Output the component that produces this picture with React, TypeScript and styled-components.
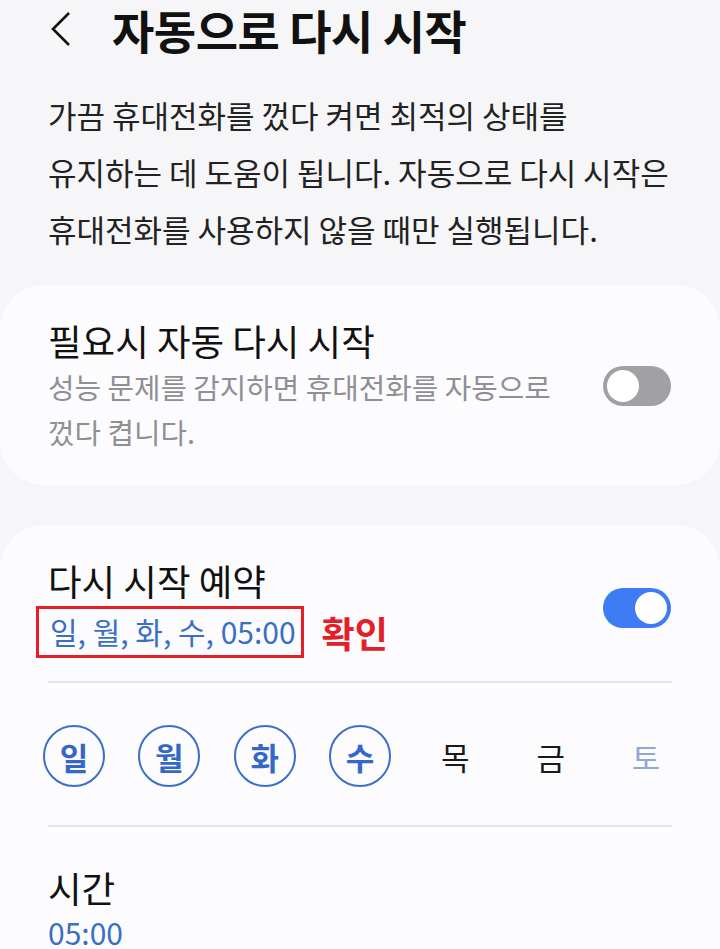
import React from "react";
import styled, { createGlobalStyle } from "styled-components";

const GlobalStyle = createGlobalStyle`
  html, body {
    margin: 0;
    padding: 0;
    background: #f6f6f8;
    font-family: "Noto Sans CJK KR", "Noto Sans", sans-serif;
  }
`;

const Page = styled.div`
  width: 720px;
  height: 949px;
  overflow: hidden;
  background: #f6f6f8;
`;

const Header = styled.header`
  display: flex;
  align-items: center;
  height: 58px;
  padding-left: 46px;
  gap: 36px;
`;

const BackButton = styled.button`
  display: flex;
  align-items: center;
  justify-content: center;
  width: 30px;
  height: 40px;
  padding: 0;
  border: none;
  background: none;
`;

const Title = styled.h1`
  margin: 0;
  font-size: 46px;
  line-height: 56px;
  font-weight: 700;
  color: #111;
  letter-spacing: -0.5px;
`;

const Description = styled.p`
  margin: 28px 48px 0;
  font-size: 31px;
  line-height: 57px;
  color: #222;
  white-space: nowrap;
`;

const Card = styled.section<{ $gap: number }>`
  background: #fcfcfe;
  border-radius: 44px;
  margin-top: ${(p) => p.$gap}px;
  padding: 0 48px;
`;

const Row = styled.div`
  display: flex;
  align-items: center;
  justify-content: space-between;
  gap: 24px;
`;

const TextBlock = styled.div`
  display: flex;
  flex-direction: column;
`;

const ItemTitle = styled.div`
  font-size: 36.5px;
  line-height: 46px;
  color: #111;
`;

const ItemSub = styled.div`
  font-size: 28.8px;
  line-height: 45px;
  color: #8f8f94;
  white-space: nowrap;
`;

const Track = styled.div<{ $on: boolean }>`
  position: relative;
  flex: none;
  width: 68px;
  height: 40px;
  border-radius: 20px;
  background: ${(p) => (p.$on ? "#3d7cf2" : "#a0a0a5")};
  margin-right: 1px;
`;

const Knob = styled.div<{ $on: boolean }>`
  position: absolute;
  top: 4px;
  left: ${(p) => (p.$on ? "32px" : "4px")};
  width: 32px;
  height: 32px;
  border-radius: 50%;
  background: #fff;
`;

const SummaryRow = styled.div`
  display: flex;
  align-items: center;
  margin-top: 2px;
`;

const Highlight = styled.div`
  display: inline-flex;
  align-items: center;
  margin-left: -12px;
  padding: 1px 5px 2px 11px;
  border: 3px solid #e3202a;
`;

const BlueText = styled.span`
  font-size: 30px;
  line-height: 43px;
  color: #3a6fc6;
`;

const Confirm = styled.span`
  margin-left: 18px;
  font-size: 36px;
  font-weight: 700;
  color: #e3202a;
`;

const Divider = styled.hr`
  margin: 0;
  border: none;
  height: 2px;
  background: #e4e4e7;
`;

const Days = styled.div`
  display: flex;
  justify-content: space-between;
  margin: 0 -5px;
  padding: 42px 0 38px;
`;

const Day = styled.div<{ $state: "on" | "off" | "weekend" }>`
  display: flex;
  align-items: center;
  justify-content: center;
  width: 62px;
  height: 62px;
  box-sizing: border-box;
  border-radius: 50%;
  border: ${(p) => (p.$state === "on" ? "2.5px solid #3b6fc9" : "none")};
  font-size: 31px;
  font-weight: ${(p) => (p.$state === "on" ? 700 : 400)};
  color: ${(p) =>
    p.$state === "on" ? "#3467c8" : p.$state === "weekend" ? "#8ea9d8" : "#1a1a1a"};
`;

const days: { label: string; state: "on" | "off" | "weekend" }[] = [
  { label: "일", state: "on" },
  { label: "월", state: "on" },
  { label: "화", state: "on" },
  { label: "수", state: "on" },
  { label: "목", state: "off" },
  { label: "금", state: "off" },
  { label: "토", state: "weekend" },
];

const Toggle = ({ on }: { on: boolean }) => (
  <Track $on={on}>
    <Knob $on={on} />
  </Track>
);

export default function App() {
  return (
    <Page>
      <GlobalStyle />
      <Header>
        <BackButton aria-label="뒤로">
          <svg width="24" height="36" viewBox="0 0 24 36">
            <path d="M20 2 L4 18 L20 34" fill="none" stroke="#111" strokeWidth="2.6" />
          </svg>
        </BackButton>
        <Title>자동으로 다시 시작</Title>
      </Header>

      <Description>
        가끔 휴대전화를 껐다 켜면 최적의 상태를
        <br />
        유지하는 데 도움이 됩니다. 자동으로 다시 시작은
        <br />
        휴대전화를 사용하지 않을 때만 실행됩니다.
      </Description>

      <Card $gap={28} style={{ paddingTop: 33, paddingBottom: 31 }}>
        <Row>
          <TextBlock>
            <ItemTitle>필요시 자동 다시 시작</ItemTitle>
            <ItemSub>
              성능 문제를 감지하면 휴대전화를 자동으로
              <br />
              껐다 켭니다.
            </ItemSub>
          </TextBlock>
          <Toggle on={false} />
        </Row>
      </Card>

      <Card $gap={40} style={{ paddingTop: 33, paddingBottom: 40 }}>
        <Row style={{ paddingBottom: 23 }}>
          <TextBlock>
            <ItemTitle>다시 시작 예약</ItemTitle>
            <SummaryRow>
              <Highlight>
                <BlueText>일, 월, 화, 수, 05:00</BlueText>
              </Highlight>
              <Confirm>확인</Confirm>
            </SummaryRow>
          </TextBlock>
          <Toggle on />
        </Row>
        <Divider />
        <Days>
          {days.map((d) => (
            <Day key={d.label} $state={d.state}>
              {d.label}
            </Day>
          ))}
        </Days>
        <Divider />
        <TextBlock style={{ paddingTop: 38 }}>
          <ItemTitle>시간</ItemTitle>
          <BlueText>05:00</BlueText>
        </TextBlock>
      </Card>
    </Page>
  );
}
